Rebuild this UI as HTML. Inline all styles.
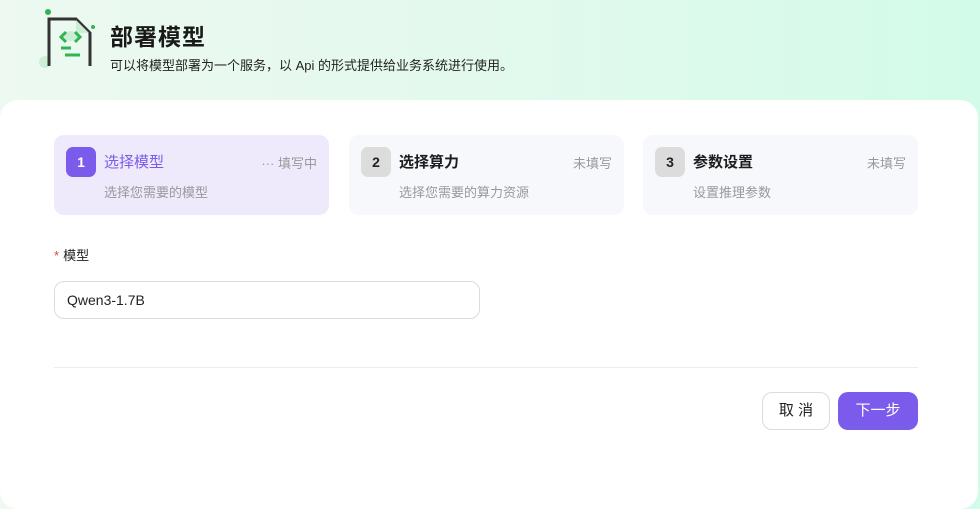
<!DOCTYPE html>
<html><head><meta charset="utf-8"><style>
*{margin:0;padding:0;box-sizing:border-box}
html,body{width:980px;height:509px;overflow:hidden}
body{font-family:"Liberation Sans","Noto Sans CJK SC",sans-serif;background:linear-gradient(90deg,#edf9f1 0%,#e3f9ee 50%,#d3fbe9 100%);position:relative}
.panel{position:absolute;left:0;top:100px;width:978px;height:409px;background:#fff;border-radius:18px}
h1{position:absolute;left:110px;top:18px;font-size:23px;font-weight:bold;color:#1a1a1a;letter-spacing:1px}
.desc{position:absolute;left:110px;top:55px;font-size:13px;color:#222}
.card{position:absolute;top:135px;width:275px;height:80px;border-radius:10px;background:#f7f8fc}
.card.a{background:#eee9fb}
.b{position:absolute;left:12px;top:12px;width:30px;height:30px;border-radius:7px;background:#dcdcdc;color:#222;font-size:14px;font-weight:bold;text-align:center;line-height:30px}
.a .b{background:#7b5bec;color:#fff}
.t{position:absolute;left:50px;top:16px;font-size:15px;font-weight:bold;color:#1d1d1d}
.a .t{color:#7b5bec;font-weight:normal}
.s{position:absolute;left:50px;top:47px;font-size:13px;color:#999}
.st{position:absolute;right:12px;top:18px;font-size:13px;color:#999}
.lbl{position:absolute;left:54px;top:245px;font-size:13px;color:#222}
.lbl i{color:#e0443e;font-style:normal;margin-right:4px}
.inp{position:absolute;left:54px;top:281px;width:426px;height:38px;border:1px solid #dcdcdc;border-radius:10px;font-size:14px;color:#222;padding-left:12px;line-height:36px}
.hr{position:absolute;left:54px;top:367px;width:864px;height:1px;background:#ececec}
.btn{position:absolute;top:392px;height:38px;border-radius:10px;font-size:15px;text-align:center;line-height:36px}
</style></head><body>
<svg style="position:absolute;left:36px;top:6px" width="64" height="66" viewBox="0 0 64 66">
<circle cx="12" cy="6" r="3" fill="#2fb552"/>
<circle cx="57" cy="21" r="2" fill="#2fb552"/>
<circle cx="9" cy="56" r="6" fill="#cdeed6"/>
<path d="M13 60V13H40L54 27V60" fill="none" stroke="#333" stroke-width="3"/>
<path d="M40 14V27H53Z" fill="#cdeed6"/>
<ellipse cx="35" cy="30" rx="7" ry="5" fill="#cdeed6"/>
<path d="M30 26L25 31L30 36M39 26L44 31L39 36" fill="none" stroke="#2fb552" stroke-width="3"/>
<path d="M25 42H35M29 49H44" stroke="#2fb552" stroke-width="3"/>
</svg>
<h1>部署模型</h1>
<div class="desc">可以将模型部署为一个服务，以 Api 的形式提供给业务系统进行使用。</div>
<div class="panel"></div>
<div class="card a" style="left:54px"><div class="b">1</div><div class="t">选择模型</div><div class="st">··· 填写中</div><div class="s">选择您需要的模型</div></div>
<div class="card" style="left:349px"><div class="b">2</div><div class="t">选择算力</div><div class="st">未填写</div><div class="s">选择您需要的算力资源</div></div>
<div class="card" style="left:643px"><div class="b">3</div><div class="t">参数设置</div><div class="st">未填写</div><div class="s">设置推理参数</div></div>
<div class="lbl"><i>*</i>模型</div>
<div class="inp">Qwen3-1.7B</div>
<div class="hr"></div>
<div class="btn" style="left:762px;width:68px;border:1px solid #dcdcdc;color:#222;background:#fff">取 消</div>
<div class="btn" style="left:838px;width:80px;background:#7b5bec;color:#fff;line-height:38px">下一步</div>
</body></html>
